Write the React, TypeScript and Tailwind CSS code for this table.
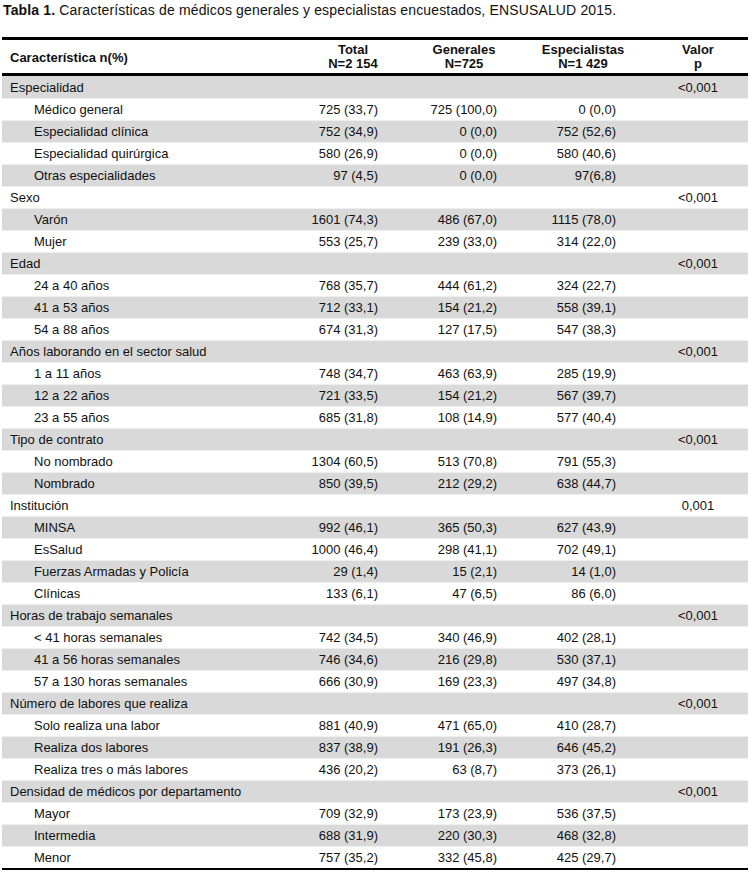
type Row = { label: string; sub?: boolean; total?: string; gen?: string; esp?: string; p?: string };

const rows: Row[] = [
  { label: "Especialidad", p: "<0,001" },
  { label: "Médico general", sub: true, total: "725 (33,7)", gen: "725 (100,0)", esp: "0 (0,0)" },
  { label: "Especialidad clínica", sub: true, total: "752 (34,9)", gen: "0 (0,0)", esp: "752 (52,6)" },
  { label: "Especialidad quirúrgica", sub: true, total: "580 (26,9)", gen: "0 (0,0)", esp: "580 (40,6)" },
  { label: "Otras especialidades", sub: true, total: "97 (4,5)", gen: "0 (0,0)", esp: "97(6,8)" },
  { label: "Sexo", p: "<0,001" },
  { label: "Varón", sub: true, total: "1601 (74,3)", gen: "486 (67,0)", esp: "1115 (78,0)" },
  { label: "Mujer", sub: true, total: "553 (25,7)", gen: "239 (33,0)", esp: "314 (22,0)" },
  { label: "Edad", p: "<0,001" },
  { label: "24 a 40 años", sub: true, total: "768 (35,7)", gen: "444 (61,2)", esp: "324 (22,7)" },
  { label: "41 a 53 años", sub: true, total: "712 (33,1)", gen: "154 (21,2)", esp: "558 (39,1)" },
  { label: "54 a 88 años", sub: true, total: "674 (31,3)", gen: "127 (17,5)", esp: "547 (38,3)" },
  { label: "Años laborando en el sector salud", p: "<0,001" },
  { label: "1 a 11 años", sub: true, total: "748 (34,7)", gen: "463 (63,9)", esp: "285 (19,9)" },
  { label: "12 a 22 años", sub: true, total: "721 (33,5)", gen: "154 (21,2)", esp: "567 (39,7)" },
  { label: "23 a 55 años", sub: true, total: "685 (31,8)", gen: "108 (14,9)", esp: "577 (40,4)" },
  { label: "Tipo de contrato", p: "<0,001" },
  { label: "No nombrado", sub: true, total: "1304 (60,5)", gen: "513 (70,8)", esp: "791 (55,3)" },
  { label: "Nombrado", sub: true, total: "850 (39,5)", gen: "212 (29,2)", esp: "638 (44,7)" },
  { label: "Institución", p: "0,001" },
  { label: "MINSA", sub: true, total: "992 (46,1)", gen: "365 (50,3)", esp: "627 (43,9)" },
  { label: "EsSalud", sub: true, total: "1000 (46,4)", gen: "298 (41,1)", esp: "702 (49,1)" },
  { label: "Fuerzas Armadas y Policía", sub: true, total: "29 (1,4)", gen: "15 (2,1)", esp: "14 (1,0)" },
  { label: "Clínicas", sub: true, total: "133 (6,1)", gen: "47 (6,5)", esp: "86 (6,0)" },
  { label: "Horas de trabajo semanales", p: "<0,001" },
  { label: "< 41 horas semanales", sub: true, total: "742 (34,5)", gen: "340 (46,9)", esp: "402 (28,1)" },
  { label: "41 a 56 horas semanales", sub: true, total: "746 (34,6)", gen: "216 (29,8)", esp: "530 (37,1)" },
  { label: "57 a 130 horas semanales", sub: true, total: "666 (30,9)", gen: "169 (23,3)", esp: "497 (34,8)" },
  { label: "Número de labores que realiza", p: "<0,001" },
  { label: "Solo realiza una labor", sub: true, total: "881 (40,9)", gen: "471 (65,0)", esp: "410 (28,7)" },
  { label: "Realiza dos labores", sub: true, total: "837 (38,9)", gen: "191 (26,3)", esp: "646 (45,2)" },
  { label: "Realiza tres o más labores", sub: true, total: "436 (20,2)", gen: "63 (8,7)", esp: "373 (26,1)" },
  { label: "Densidad de médicos por departamento", p: "<0,001" },
  { label: "Mayor", sub: true, total: "709 (32,9)", gen: "173 (23,9)", esp: "536 (37,5)" },
  { label: "Intermedia", sub: true, total: "688 (31,9)", gen: "220 (30,3)", esp: "468 (32,8)" },
  { label: "Menor", sub: true, total: "757 (35,2)", gen: "332 (45,8)", esp: "425 (29,7)" },
];

const grid = "grid grid-cols-[316px_70px_152px_108px_100px]";

export default function App() {
  return (
    <div className="w-[754px] h-[875px] bg-white text-[13px] text-[#111] pt-[3px]" style={{ fontFamily: '"Liberation Sans", Arial, sans-serif' }}>
      <p className="pl-[3px] text-[14px] tracking-[0.15px] leading-[15px] whitespace-nowrap">
        <span className="font-bold">Tabla 1.</span> Características de médicos generales y especialistas encuestados, ENSUSALUD 2015.
      </p>

      <div className="mx-[2px] mt-[19px] w-[746px] border-t-[3px] border-b-[2px] border-black">
        {/* header */}
        <div className={`${grid} h-[36px] border-b-[3px] border-black font-bold leading-[14px] items-center whitespace-nowrap`}>
          <div className="pl-[8px] pt-[2px]">Característica n(%)</div>
          <div className="flex flex-col items-center">
            <span>Total</span>
            <span>N=2 154</span>
          </div>
          <div className="text-center">Generales<br />N=725</div>
          <div className="text-center pr-[22px]">Especialistas<br />N=1 429</div>
          <div className="text-center">Valor<br />p</div>
        </div>

        {rows.map((r, i) => (
          <div
            key={i}
            className={`${grid} h-[22px] items-center leading-[15px] whitespace-nowrap ${i > 0 ? "border-t border-[#efefef]" : ""} ${i % 2 === 0 ? "bg-[#d9d9d9]" : "bg-white"}`}
          >
            <div className={r.sub ? "pl-[32px]" : "pl-[8px]"}>{r.label}</div>
            <div className="flex justify-end pr-[10px]">{r.total}</div>
            <div className="flex justify-end pr-[43px]">{r.gen}</div>
            <div className="flex justify-end pr-[32px]">{r.esp}</div>
            <div className="text-center">{r.p}</div>
          </div>
        ))}
      </div>
    </div>
  );
}
